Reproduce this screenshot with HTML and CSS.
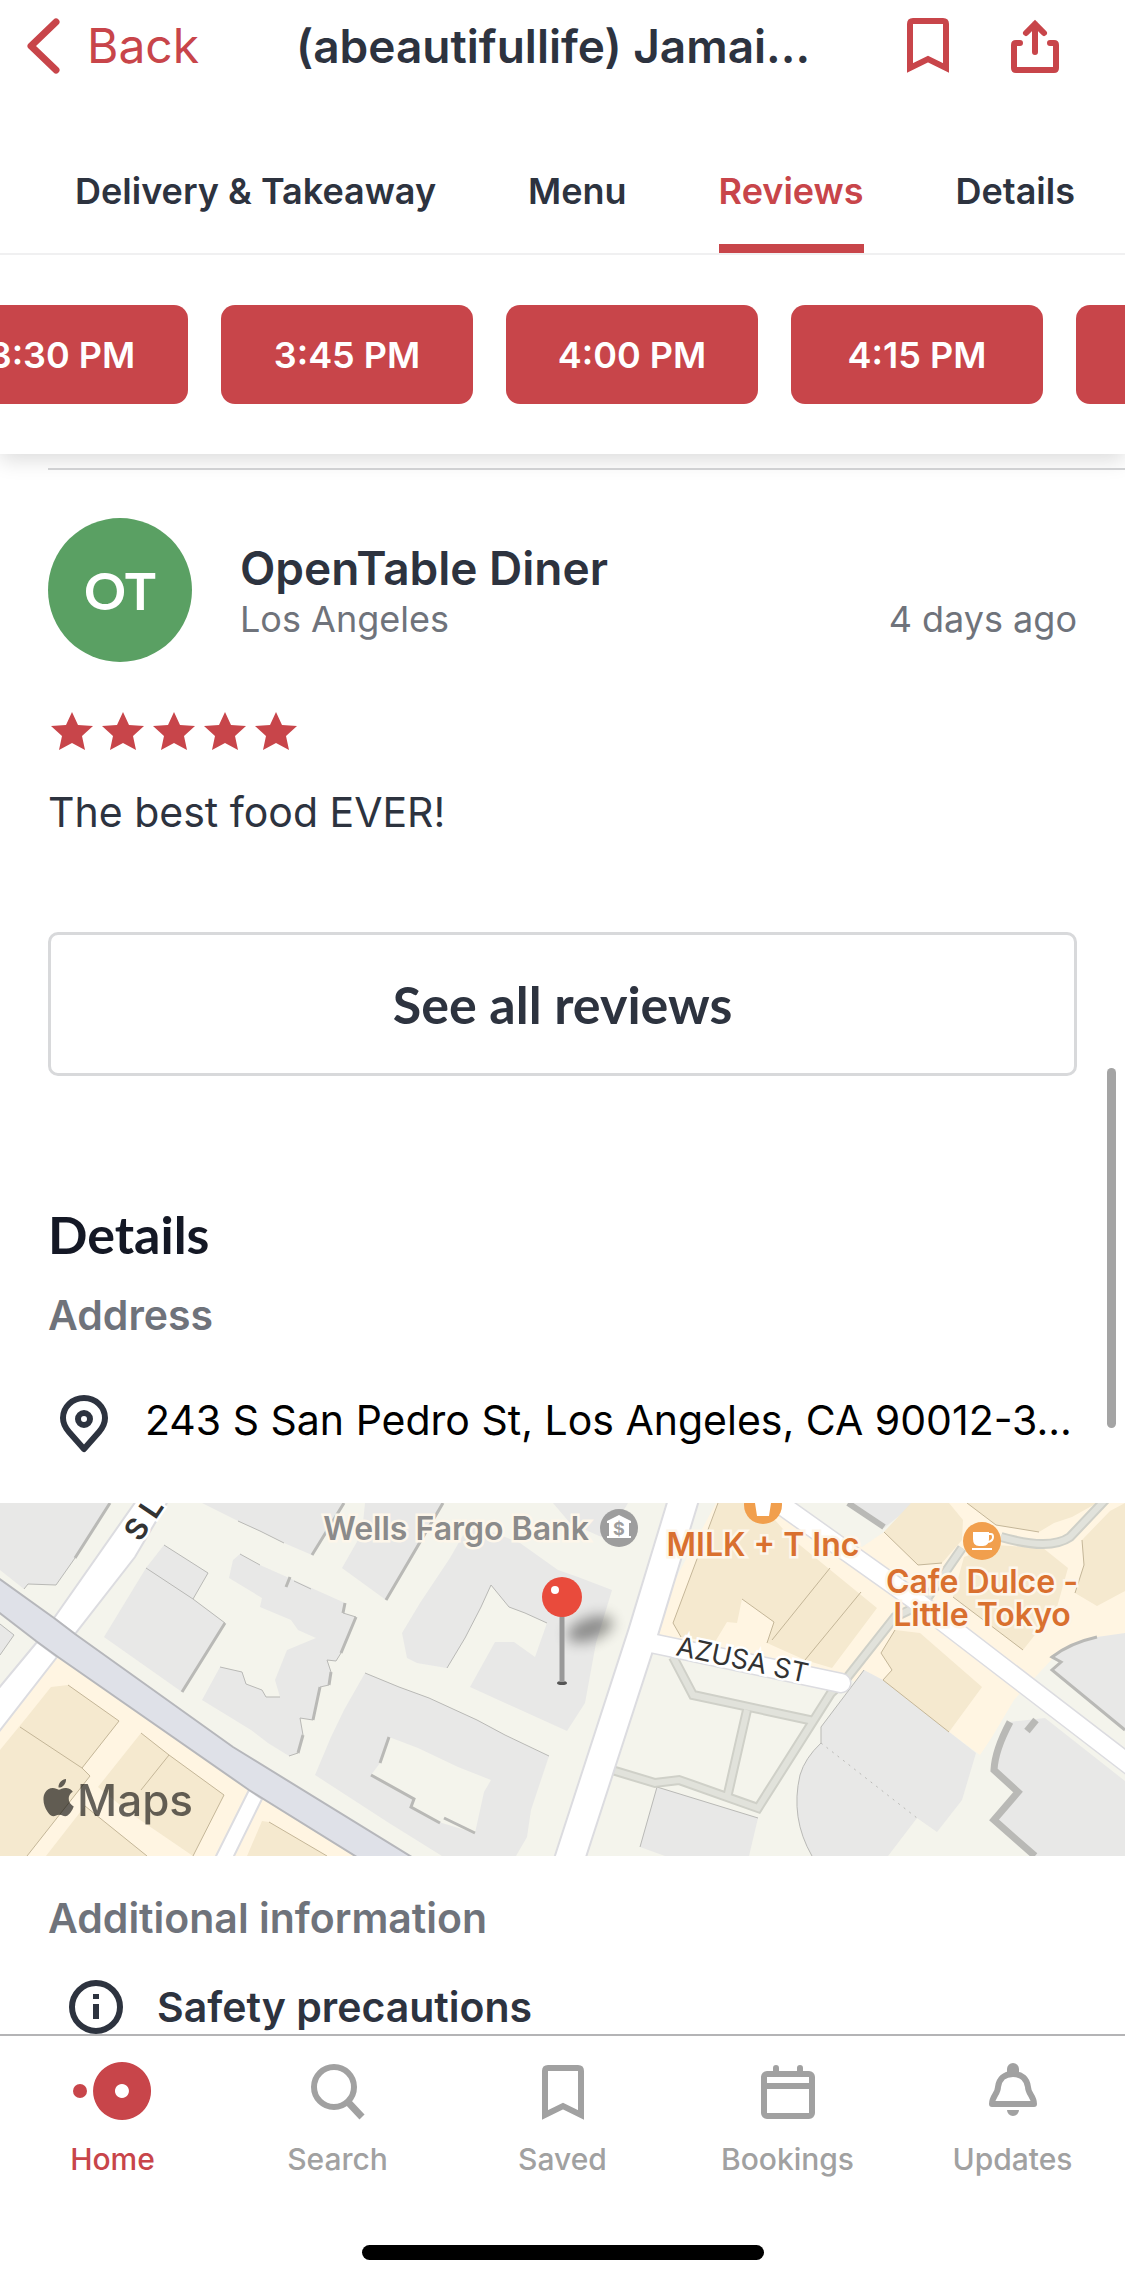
FILE: index.html
```html
<!DOCTYPE html>
<html lang="en">
<head>
    <meta charset="UTF-8">
    <meta name="viewport" content="width=device-width, initial-scale=1.0">
    <title>(abeautifullife) Jamaican</title>
    <link rel="stylesheet" href="styles.css">
</head>
<body>

    <div class="top-panel">
        <header class="header">
            <a href="#" class="back">
                <svg width="34" height="56" viewBox="0 0 34 56" fill="none" stroke="currentColor" stroke-width="7" stroke-linecap="round" stroke-linejoin="round"><path d="M29 4 4 28l25 24"/></svg>
                Back
            </a>
            <h1 class="title">(abeautifullife) Jamai...</h1>
            <div class="header-actions">
                <button type="button" class="icon-button" aria-label="Save">
                    <svg width="42" height="56" viewBox="0 0 42 56" fill="none" stroke="currentColor" stroke-width="6"><path d="M3 50V6q0-3 3-3h30q3 0 3 3v44L21 41z"/></svg>
                </button>
                <button type="button" class="icon-button" aria-label="Share">
                    <svg width="48" height="56" viewBox="0 0 48 56" fill="none" stroke="currentColor" stroke-width="6" stroke-linecap="round"><path d="M9 25H5q-2 0-2 2v23q0 2 2 2h38q2 0 2-2V27q0-2-2-2h-4"/><path d="M24 34V6M15 15l9-9 9 9"/></svg>
                </button>
            </div>
        </header>

        <nav class="tabs">
            <a href="#">Delivery &amp; Takeaway</a>
            <a href="#">Menu</a>
            <a href="#reviews" class="active">Reviews</a>
            <a href="#details">Details</a>
        </nav>

        <div class="times">
            <button type="button">3:30 PM</button>
            <button type="button">3:45 PM</button>
            <button type="button">4:00 PM</button>
            <button type="button">4:15 PM</button>
            <button type="button" aria-label="Next time"></button>
        </div>
    </div>

    <main>
        <section id="reviews" class="section">
            <article class="review">
                <div class="reviewer">
                    <div class="avatar">OT</div>
                    <div class="reviewer-info">
                        <h2>OpenTable Diner</h2>
                        <div class="reviewer-meta">
                            <span>Los Angeles</span>
                            <span>4 days ago</span>
                        </div>
                    </div>
                </div>
                <svg class="stars" width="252" height="38" viewBox="0 0 252 38" role="img" aria-label="5 stars">
                    <defs><path id="star" d="M24 0l6 13 15 1-11 10 3 14-13-7-13 7 3-14L3 14l15-1z"/></defs>
                    <use href="#star"/>
                    <use href="#star" x="51"/>
                    <use href="#star" x="102"/>
                    <use href="#star" x="153"/>
                    <use href="#star" x="204"/>
                </svg>
                <p class="review-text">The best food EVER!</p>
            </article>
            <button type="button" class="see-all">See all reviews</button>
        </section>

        <section id="details" class="section">
            <h2 class="section-title">Details</h2>
            <h3 class="label">Address</h3>
            <div class="address">
                <svg width="50" height="58" viewBox="0 0 50 58" fill="none" stroke="currentColor" stroke-width="6"><path d="M25 54 10 37Q4 30 4 23a21 20 0 0 1 42 0q0 7-6 14z" stroke-linejoin="round"/><circle cx="25" cy="24" r="6"/></svg>
                <span>243 S San Pedro St, Los Angeles, CA 90012-3...</span>
            </div>
        </section>

        <svg class="map" viewBox="0 0 1125 353" preserveAspectRatio="xMidYMid slice" role="img" aria-label="Map">
            <defs>
                <filter id="blur" x="-50%" y="-100%" width="200%" height="300%"><feGaussianBlur stdDeviation="7"/></filter>
            </defs>
            <rect class="land" width="1125" height="353"/>

            <!-- shopping areas -->
            <g class="shops">
                <path d="M57 154 249 287 216 353H0V228zM262 296 356 353H234z"/>
                <path d="M716 0H1125V134L1097 134 1054 154 1014 197 992 234 980 252 949 229 846 174 652 130 668 90z"/>
            </g>
            <path class="land" d="M790 0H915L884 29 862 44z"/>

            <!-- buildings -->
            <g class="building">
                <path d="M0 0H110L75 55 56 82 28 81 24 86 0 67z"/>
                <path d="M0 121 14 132 0 152z"/>
                <path d="M164 42 208 70 193 96 225 120 182 189 104 134 146 65z"/>
                <path d="M202 0H344L312 52 284 40 260 28 238 18z"/>
                <path d="M365 0H443L386 97 342 65 362 30z"/>
                <path d="M240 51 260 62 287 74 316 87 345 100 343 110 356 114 341 150 336 158 327 157 331 169 329 182 320 184 313 217 300 215 303 232 298 250 289 253 268 240 251 227 220 208 202 197 220 164 242 169 246 181 262 187 266 194 280 194 275 177 287 147 316 135 298 127 291 117 260 104 262 95 229 75 233 57z"/>
                <path d="M365 170 399 184 429 195 477 217 505 232 549 253 531 307 527 334 516 353H442L389 320 315 272 331 234 344 207zM389 234 380 260 371 272 414 296 411 304 442 320 475 330 484 289 491 277 458 264 418 245z"/>
                <path d="M450 55 470 20 520 40 558 67 578 74 612 87 596 140 585 200 567 228 470 184 495 139 514 139 535 154 547 120 525 110 509 104 491 82 481 104 465 135 447 165 417 160 407 155 402 130 420 100z"/>
                <path d="M553 0H628L606 36 570 20z"/>
                <path d="M848 0H915L884 25z"/>
                <path d="M864 167 883 177 976 250 962 297 937 329 917 315 888 353H812Q790 315 800 272 805 255 821 240V224L855 179z"/>
                <path d="M657 284 758 315 749 353H665L640 344z"/>
                <path d="M1097 134 1125 130V227L1052 167 1061 159 1052 154Q1070 140 1097 134z"/>
                <path d="M1009 219 1045 215 1125 278V353H1035L991 317 1018 289 991 267Q993 247 1009 219z"/>
            </g>
            <g class="building shop">
                <path d="M51 184 68 182 119 218 82 265 90 273 27 353H0V247L27 214z"/>
                <path d="M141 230 169 252 224 292 193 353 130 310 98 284z"/>
                <path d="M85 303 147 353H46z"/>
                <path d="M262 318 269 319 327 353H247z"/>
                <path d="M718 0 673 120 681 134 715 139 727 119 737 120 742 96 774 119 767 140 805 157 832 165 877 105 828 65 790 34 760 0z"/>
                <path d="M911 0H949L963 17 962 37 942 60 918 62 884 29z"/>
                <path d="M967 0 996 22 1039 29 1054 20 1072 14 1097 0z"/>
                <path d="M1125 0 1110 8 1082 37 1084 62 1075 90 1097 103 1125 88z"/>
                <path d="M964 54 996 42 1043 45 1068 65 1057 104 1023 147 953 94z"/>
                <path d="M895 127 920 130 982 184 949 229 883 177 892 167 881 150z"/>
            </g>

            <!-- building edges -->
            <g class="edge">
                <path d="M75 55 56 82 28 81 24 86M0 121 14 132 0 152M146 65 193 96 225 120M164 42 208 70 193 96M238 18 260 28 284 40M240 51 260 62M294 78 311 86M220 164 242 169 246 181 262 187 266 194 280 194M365 170 399 184 429 195 477 217 505 232 549 253M491 82 481 104 465 135 447 165M491 82 509 104 525 110 547 120"/>
                <path d="M657 284 758 315M657 284 640 344M812 353Q790 315 800 272 805 255 821 240V224L855 179 864 167"/>
                <path d="M821 240 917 315" stroke-dasharray="2 5"/>
            </g>
            <g class="edge thick">
                <path d="M110 0 75 55M225 120 182 189M344 0 312 52M443 0 386 97M345 100 343 110M356 114 341 150M331 169 329 182M320 184 313 217M303 232 298 250M389 234 380 260M371 272 414 296 411 304 440 320M444 315 475 330M290 74 286 84"/>
                <path d="M343 110 356 114M341 150 336 158 327 157 331 169M329 182 320 184M313 217 300 215 303 232M298 250 289 253" stroke-width="1"/>
                <path d="M848 0 884 24" stroke-width="6"/>
                <path d="M1097 134Q1070 140 1052 154L1061 159 1052 167 1125 227"/>
                <path d="M1010 219Q995 247 994 267L1018 289 994 317 1035 353" stroke-width="7"/>
                <path d="M1036 217 1027 228" stroke-width="7"/>
            </g>
            <g class="edge brown">
                <path d="M68 182 119 218 82 265M20 224 82 265 90 273 27 353M141 230 169 252 141 287M169 252 224 292 193 353M85 303 147 353M269 319 327 353"/>
                <path d="M718 0 673 120 681 134M742 96 774 119 767 140M772 137 830 65M805 157 861 89M967 0 996 22 1039 29M884 29 918 62 942 60M895 127 881 150 892 167 883 177 949 229M953 94 1023 147M1082 37 1084 62 1075 90"/>
            </g>

            <!-- footpaths: dark casing under a lighter line -->
            <g class="path-casing">
                <path id="paths" d="M1001 34Q1050 48 1070 34L1106 -4M962 45 924 100 895 114 846 176 831 190 758 305 679 277 655 280 612 267M673 154 693 192 814 218M747 207 727 295"/>
            </g>
            <use href="#paths" class="path-fill"/>

            <!-- roads -->
            <g class="road">
                <path d="M136 -2 54 115 75 131 135 54 168 -2z"/>
                <path d="M37 139 -2 186V230L57 154z"/>
                <path d="M249 287 215 355H233L262 296z"/>
            </g>
            <g class="road-casing">
                <path d="M646 139 841 180" stroke-width="21"/>
                <path d="M770 -6 915 97 1135 266" stroke-width="21"/>
                <path d="M684 -5 643 130 569 358" stroke-width="32"/>
            </g>
            <g class="road-fill">
                <path d="M646 139 841 180" stroke-width="18"/>
                <path d="M770 -6 915 97 1135 266" stroke-width="18"/>
                <path d="M684 -5 643 130 569 358" stroke-width="28"/>
            </g>
            <path class="main-road" d="M-3 74 54 115 75 131 233 244 415 356H360L249 287 58 154 36 138 -3 108z"/>

            <!-- labels -->
            <g class="street">
                <text transform="translate(675 152) rotate(12)">AZUSA ST</text>
                <text class="steep" transform="translate(140 40) rotate(-56)">S L</text>
            </g>
            <g class="place">
                <text class="bank" x="456" y="37">Wells Fargo Bank</text>
                <text x="763" y="53">MILK + T Inc</text>
                <text x="982" y="90">Cafe Dulce -</text>
                <text x="982" y="123">Little Tokyo</text>
            </g>
            <g>
                <circle cx="619" cy="25" r="19" fill="#9d9d9d"/>
                <path d="M607 18 619 12 631 18V20H629V33H631V35H607V33H609V20H607z" fill="#fff"/>
                <text class="dollar" x="619" y="32">$</text>
            </g>
            <g>
                <circle cx="763" cy="2" r="19" fill="#f19f4d"/>
                <path d="M755 0h16l-2 13h-12z" fill="#fff"/>
            </g>
            <g>
                <circle cx="982" cy="38" r="19" fill="#f19f4d"/>
                <path d="M973 29h16v7q0 7-6 7h-4q-6 0-6-7zM972 45h20v2h-20z" fill="#fff"/>
                <path d="M989 31h2q2 0 2 3 0 4-5 5" fill="none" stroke="#fff" stroke-width="2"/>
            </g>

            <!-- pin -->
            <ellipse cx="590" cy="126" rx="24" ry="11" transform="rotate(-20 590 126)" fill="#000" opacity=".4" filter="url(#blur)"/>
            <ellipse cx="562" cy="180" rx="5" ry="2" fill="#555"/>
            <path d="M562 110V179" stroke="#999" stroke-width="5"/>
            <circle cx="562" cy="94" r="20" fill="#e94b3c"/>
            <circle cx="555" cy="87" r="4" fill="#fff"/>

            <g class="map-logo">
                <path transform="translate(40 276) scale(1.55)" d="M12.152 6.896c-.948 0-2.415-1.078-3.96-1.04-2.04.027-3.91 1.183-4.961 3.014-2.117 3.675-.546 9.103 1.519 12.09 1.013 1.454 2.208 3.09 3.792 3.039 1.52-.065 2.09-.987 3.935-.987 1.831 0 2.35.987 3.96.948 1.637-.026 2.676-1.48 3.676-2.948 1.156-1.688 1.636-3.325 1.662-3.415-.039-.013-3.182-1.221-3.22-4.857-.026-3.04 2.48-4.494 2.597-4.559-1.429-2.09-3.623-2.324-4.39-2.376-2-.156-3.675 1.09-4.61 1.09zM15.53 3.83c.843-1.012 1.4-2.427 1.245-3.83-1.207.052-2.662.805-3.532 1.818-.78.896-1.454 2.338-1.273 3.714 1.338.104 2.715-.688 3.559-1.701"/>
                <text x="77" y="313">Maps</text>
            </g>
        </svg>

        <section class="section additional">
            <h3 class="label">Additional information</h3>
            <div class="info-row">
                <svg width="54" height="54" viewBox="0 0 54 54" fill="none" stroke="currentColor" stroke-width="6"><circle cx="27" cy="27" r="24"/><path d="M27 24v15M27 14v5"/></svg>
                <span>Safety precautions</span>
            </div>
        </section>
    </main>

    <footer class="tabbar">
        <nav class="tabbar-items">
            <a href="#" class="active">
                <svg width="80" height="60" viewBox="0 0 80 60" fill="currentColor"><circle cx="7" cy="30" r="7"/><path fill-rule="evenodd" d="M49 1a29 29 0 1 0 .1 0zM49 23a7 7 0 1 1-.1 0z"/></svg>
                Home
            </a>
            <a href="#">
                <svg width="60" height="60" viewBox="0 0 60 60" fill="none" stroke="currentColor" stroke-width="6"><circle cx="26" cy="26" r="20"/><path d="M39 40 54 56" stroke-width="7"/></svg>
                Search
            </a>
            <a href="#">
                <svg width="60" height="60" viewBox="0 0 60 60" fill="none" stroke="currentColor" stroke-width="6"><path d="M12 54V10q0-3 3-3h30q3 0 3 3v44L30 45z"/></svg>
                Saved
            </a>
            <a href="#">
                <svg width="60" height="60" viewBox="0 0 60 60" fill="none" stroke="currentColor" stroke-width="6"><rect x="6" y="13" width="48" height="42" rx="3"/><path d="M6 25h48"/><path d="M18 7v6M42 7v6" stroke-linecap="round"/></svg>
                Bookings
            </a>
            <a href="#">
                <svg width="60" height="60" viewBox="0 0 60 60" fill="none" stroke="currentColor" stroke-width="6"><path d="M9 43c0-8 6-10 6-17 1-8 6-13 15-13s14 5 15 13c0 7 6 9 6 17z" stroke-linejoin="round"/><path d="M24 13V8a6 6 0 0 1 12 0v5zM24 49h12a6 6 0 0 1-12 0z" fill="currentColor" stroke="none"/></svg>
                Updates
            </a>
        </nav>
        <div class="home-indicator"></div>
    </footer>

    <div class="scroll-thumb"></div>

</body>
</html>
```
FILE: styles.css
```css
* {
    box-sizing: border-box;
}

body {
    margin: 0;
    background-color: #fff;
    color: #2d333f;
    font-family: Inter, "Liberation Sans", sans-serif;
    font-size: 41px;
    line-height: 56px;
}

h1, h2, h3, p {
    margin: 0;
}

a {
    color: inherit;
    text-decoration: none;
}

button {
    font-family: inherit;
    cursor: pointer;
}

svg {
    display: block;
    flex-shrink: 0;
}

/* Header, tabs and time slots */
.top-panel {
    background-color: #fff;
    box-shadow: 0 6px 20px rgba(0, 0, 0, 0.14);
    overflow: clip;
    overflow-clip-margin: 40px;
}

.header {
    display: flex;
    align-items: center;
    justify-content: space-between;
    height: 92px;
    padding: 0 66px 0 27px;
}

.back {
    display: flex;
    align-items: center;
    gap: 26px;
    color: #c8454a;
    font-size: 48px;
}

.title {
    font-size: 46px;
    font-weight: 600;
    white-space: nowrap;
}

.header-actions {
    display: flex;
    gap: 62px;
}

.icon-button {
    padding: 0;
    border: 0;
    background: none;
    color: #c8454a;
}

.tabs {
    display: flex;
    justify-content: space-between;
    padding: 75px 50px 0 75px;
    border-bottom: 2px solid #f0f0f1;
}

.tabs a {
    padding-bottom: 29px;
    border-bottom: 9px solid transparent;
    font-size: 36px;
    font-weight: 600;
    line-height: 48px;
}

.tabs .active {
    color: #c8454a;
    border-bottom-color: #c8454a;
}

.times {
    display: flex;
    gap: 33px;
    margin-left: -64px;
    padding: 50px 0;
    overflow: hidden;
}

.times button {
    flex: 0 0 252px;
    height: 99px;
    border: 0;
    border-radius: 14px;
    background-color: #c8454a;
    color: #fff;
    font-size: 36px;
    font-weight: 600;
}

/* Reviews */
.section {
    padding: 0 48px;
}

.review {
    margin: 14px -48px 0 0;
    padding: 48px 48px 0 0;
    border-top: 2px solid #d0d1d3;
}

.reviewer {
    display: flex;
    align-items: center;
    gap: 48px;
}

.avatar {
    display: flex;
    align-items: center;
    justify-content: center;
    width: 144px;
    height: 144px;
    border-radius: 50%;
    background-color: #5aa063;
    color: #fff;
    font-family: Lato, sans-serif;
    font-size: 52px;
    font-weight: 700;
}

.reviewer-info {
    flex: 1;
}

.reviewer-info h2 {
    font-size: 46px;
    font-weight: 600;
    line-height: 58px;
}

.reviewer-meta {
    display: flex;
    justify-content: space-between;
    color: #6f737b;
    font-size: 36px;
    line-height: 44px;
}

.stars {
    margin-top: 50px;
    fill: #c8454a;
}

.review-text {
    margin-top: 34px;
}

.see-all {
    display: block;
    width: 100%;
    height: 144px;
    margin-top: 92px;
    border: 3px solid #d8d9db;
    border-radius: 10px;
    background-color: #fff;
    color: #2d333f;
    font-family: Lato, sans-serif;
    font-size: 52px;
    font-weight: 700;
}

/* Details */
.section-title {
    margin-top: 126px;
    color: #141825;
    font-family: Lato, sans-serif;
    font-size: 52px;
    font-weight: 700;
    line-height: 64px;
}

.label {
    margin-top: 21px;
    color: #6f737b;
    font-size: 41px;
    font-weight: 600;
}

.address {
    display: flex;
    align-items: flex-start;
    gap: 36px;
    margin: 52px 0 50px;
    padding-left: 11px;
}

.address span {
    color: #000;
    line-height: 50px;
    white-space: nowrap;
}

.additional .label {
    margin-top: 34px;
}

.info-row {
    display: flex;
    align-items: center;
    gap: 34px;
    height: 54px;
    margin-top: 34px;
    padding-left: 21px;
    font-weight: 600;
}

/* Map */
.map {
    width: 100%;
    height: 353px;
}

.land {
    fill: #f4f4ec;
}

.shops {
    fill: #fff5e2;
}

.building {
    fill: #e8e8e7;
    fill-rule: evenodd;
}

.shop {
    fill: #f5e9cf;
}

.edge {
    fill: none;
    stroke: #b9b9b6;
    stroke-width: 1;
}

.thick {
    stroke-width: 3;
}

.brown {
    stroke: #c4b698;
}

.road {
    fill: #fff;
    stroke: #dcdce0;
    stroke-width: 2;
}

.road-casing {
    fill: none;
    stroke: #dcdce0;
    stroke-linecap: round;
}

.road-fill {
    fill: none;
    stroke: #fff;
    stroke-linecap: round;
}

.main-road {
    fill: #dfe1e8;
    stroke: #b6b7bb;
    stroke-width: 2;
}

.path-casing {
    fill: none;
    stroke: #cfd0c8;
    stroke-width: 10;
}

.path-fill {
    fill: none;
    stroke: #e1e2db;
    stroke-width: 6;
}

.street {
    fill: #333;
    stroke: #fff;
    stroke-width: 5;
    paint-order: stroke;
    font-size: 27px;
}

.steep {
    font-size: 30px;
    font-weight: 600;
}

.place {
    fill: #d9702f;
    stroke: #fdf6ea;
    stroke-width: 5;
    paint-order: stroke;
    font-size: 32px;
    font-weight: 600;
    text-anchor: middle;
}

.bank {
    fill: #8b8b8b;
}

.dollar {
    fill: #9d9d9d;
    font-size: 18px;
    font-weight: 700;
    text-anchor: middle;
}

.map-logo {
    fill: #000;
    opacity: 0.6;
    font-size: 44px;
    font-weight: 500;
}

/* Bottom bar */
.tabbar {
    padding: 25px 0 24px;
    border-top: 2px solid #b4b4b6;
    background-color: #fff;
}

.tabbar-items {
    display: grid;
    grid-template-columns: repeat(5, 1fr);
}

.tabbar-items a {
    display: flex;
    flex-direction: column;
    align-items: center;
    gap: 20px;
    color: #a1a1a1;
    font-size: 30px;
    font-weight: 500;
    line-height: 36px;
}

.tabbar-items .active {
    color: #c8454a;
}

.home-indicator {
    width: 402px;
    height: 15px;
    margin: 68px auto 0;
    border-radius: 8px;
    background-color: #000;
}

.scroll-thumb {
    position: fixed;
    top: 1068px;
    right: 9px;
    width: 9px;
    height: 360px;
    border-radius: 5px;
    background-color: #a4a4a4;
}
```
